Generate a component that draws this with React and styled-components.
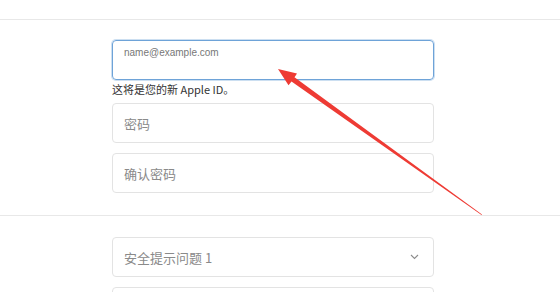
import React from "react";
import styled, { createGlobalStyle } from "styled-components";

const Global = createGlobalStyle`
  html, body { margin: 0; padding: 0; background: #fff; }
  body { font-family: "Noto Sans CJK SC", "Liberation Sans", sans-serif; }
`;

const Page = styled.div`
  position: relative;
  width: 560px;
  height: 292px;
  overflow: hidden;
  background: #fff;
`;

const Section = styled.div`
  border-top: 1px solid #e8e8e8;
  padding: ${(p) => p.$pad || "20px 0 0 112px"};
  display: flex;
  flex-direction: column;
  gap: ${(p) => p.$gap || "10px"};
`;

const TopBlank = styled.div`
  height: 19px;
`;

const Field = styled.div`
  width: 322px;
  height: 40px;
  box-sizing: border-box;
  border: 1px solid ${(p) => (p.$focus ? "#6ea3d8" : "#e3e3e3")};
  box-shadow: ${(p) => (p.$focus ? "0 0 0 1px rgba(110,163,216,0.35)" : "none")};
  border-radius: 4px;
  display: flex;
  align-items: ${(p) => (p.$focus ? "flex-start" : "center")};
  justify-content: space-between;
  padding: ${(p) => (p.$focus ? "6px 14px 0 11px" : "0 14px 0 11px")};
  font-size: ${(p) => (p.$focus ? "10px" : "13px")};
  color: ${(p) => (p.$focus ? "#777" : "#8a8a8a")};
  font-family: ${(p) =>
    p.$focus ? '"Liberation Sans", Arial, sans-serif' : '"Noto Sans CJK SC", sans-serif'};
`;

const EmailGroup = styled.div`
  display: flex;
  flex-direction: column;
`;

const Hint = styled.div`
  height: 13px;
  font-size: 11px;
  color: #333;
  line-height: 18px;
  font-family: "Noto Sans CJK SC", sans-serif;
`;

const Overlay = styled.svg`
  position: absolute;
  left: 0;
  top: 0;
  pointer-events: none;
`;

const Chevron = () => (
  <svg width="9" height="6" viewBox="0 0 9 6">
    <path d="M1 1 L4.5 4.5 L8 1" fill="none" stroke="#8c8c8c" strokeWidth="1.1" />
  </svg>
);

export default function App() {
  return (
    <Page>
      <Global />
      <TopBlank />
      <Section $pad="20px 0 22px 112px" $gap="10px">
        <EmailGroup>
          <Field $focus>name@example.com</Field>
          <Hint>这将是您的新 Apple ID。</Hint>
        </EmailGroup>
        <Field>密码</Field>
        <Field>确认密码</Field>
      </Section>
      <Section $pad="21px 0 0 112px" $gap="10px">
        <Field>
          <span>安全提示问题 1</span>
          <Chevron />
        </Field>
        <Field />
      </Section>
      <Overlay width="560" height="292" viewBox="0 0 560 292">
        <polygon
          points="278,69 297,73.5 294.5,77.2 482,214.5 481.5,215 291.5,81.4 288.5,85.3"
          fill="#ee3b34"
        />
      </Overlay>
    </Page>
  );
}
